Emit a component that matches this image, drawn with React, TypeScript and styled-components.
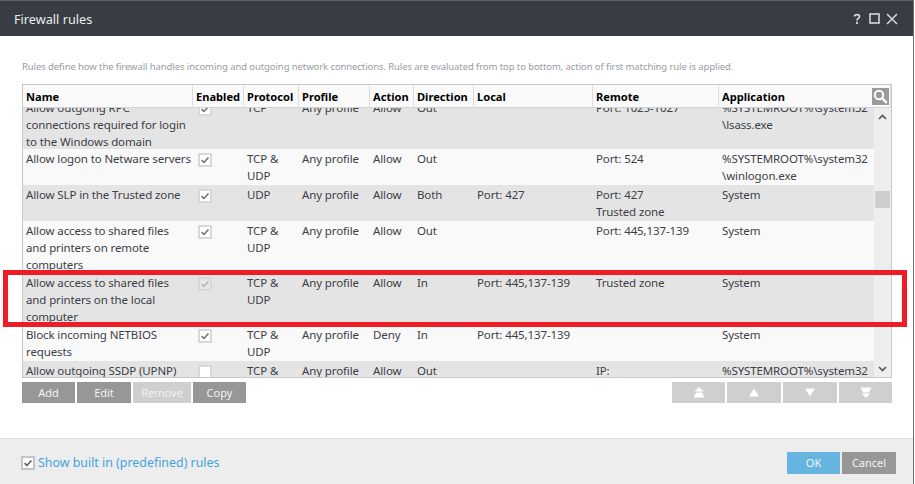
import React from "react";
import styled, { createGlobalStyle } from "styled-components";

const Global = createGlobalStyle`
  html, body { margin: 0; padding: 0; background: #fff; }
  #root { width: 915px; height: 484px; overflow: hidden; }
`;

const columns = "170px 51px 55px 71px 44px 60px 119px 126px 1fr";

const Window = styled.div`
  position: relative;
  width: 914px;
  height: 484px;
  box-sizing: border-box;
  border-right: 1px solid #6e7074;
  display: flex;
  flex-direction: column;
  font-family: "Noto Sans", "Open Sans", sans-serif;
  font-size: 11.5px;
  letter-spacing: -0.12px;
  color: #3d4046;
  background: #fff;
`;
const TitleBar = styled.div`
  height: 35px;
  flex: none;
  border-top: 1px solid #5e6165;
  background: #383c43;
  display: flex;
  align-items: center;
  justify-content: space-between;
  padding: 0 15px 0 14px;
  color: #eceef0;
  font-size: 12.7px;
  letter-spacing: 0;
`;
const TitleIcons = styled.div`
  display: flex;
  align-items: center;
  gap: 6px;
`;
const Content = styled.div`
  flex: 1;
  padding: 24px 22px 0;
`;
const Note = styled.div`
  font-size: 9.5px;
  letter-spacing: -0.09px;
  line-height: 14px;
  color: #9a9c9f;
  margin-bottom: 10px;
`;
const Table = styled.div`
  width: 870px;
  height: 294px;
  box-sizing: border-box;
  border: 1px solid #c8c8c8;
  display: flex;
  flex-direction: column;
`;
const HeaderRow = styled.div`
  position: relative;
  height: 23px;
  flex: none;
  box-sizing: border-box;
  display: grid;
  grid-template-columns: ${columns};
  background: #fafafa;
  border-bottom: 1px solid #d2d2d2;
`;
const HeaderCell = styled.div`
  padding-left: 3px;
  font-weight: 700;
  font-size: 11.1px;
  letter-spacing: 0;
  color: #000;
  line-height: 23px;
  border-right: 1px solid #dcdcdc;
  white-space: nowrap;
  &:last-of-type { border-right: none; }
`;
const SearchButton = styled.div`
  position: absolute;
  right: 2px;
  top: 3px;
  width: 17px;
  height: 17px;
  background: #9a9a9a;
  display: flex;
`;
const BodyWrap = styled.div`
  flex: 1;
  min-height: 0;
  display: flex;
`;
const Rows = styled.div`
  flex: 1;
  overflow: hidden;
`;
const RowsInner = styled.div`
  margin-top: -10px;
`;
const Row = styled.div<{ $shade: boolean; $h: number }>`
  display: grid;
  grid-template-columns: ${columns};
  height: ${(p) => p.$h}px;
  padding-top: 1px;
  box-sizing: border-box;
  background: ${(p) => (p.$shade ? "#e4e4e4" : "#f9f9f9")};
  line-height: 17px;
`;
const Cell = styled.div`
  padding-left: 3px;
  white-space: pre-line;
`;
const CheckCell = styled.div`
  padding: 3px 0 0 5px;
`;
const Box = styled.div<{ $muted?: boolean }>`
  width: 10px;
  height: 10px;
  border: 2px solid #d8d8d8;
  background: ${(p) => (p.$muted ? "#e6e6e6" : "#fff")};
  display: flex;
  align-items: center;
  justify-content: center;
`;
const Scrollbar = styled.div`
  width: 17px;
  flex: none;
  background: #eeeeee;
  display: flex;
  flex-direction: column;
  align-items: center;
  justify-content: space-between;
  position: relative;
  padding: 6px 0 5px;
  box-sizing: border-box;
`;
const Thumb = styled.div`
  position: absolute;
  top: 83px;
  left: 1px;
  width: 15px;
  height: 17px;
  background: #cdcdcd;
`;
const ToolBar = styled.div`
  display: flex;
  justify-content: space-between;
  width: 870px;
  margin-top: 4px;
`;
const Group = styled.div`
  display: flex;
  gap: 2px;
`;
const ActionButton = styled.div<{ $w: number; $off?: boolean }>`
  width: ${(p) => p.$w}px;
  height: 21px;
  background: ${(p) => (p.$off ? "#cfcfcf" : "#979797")};
  color: #f2f2f2;
  font-size: 11px;
  letter-spacing: 0;
  line-height: 21px;
  text-align: center;
`;
const ArrowButton = styled.div<{ $w: number }>`
  width: ${(p) => p.$w}px;
  height: 21px;
  background: #cfcfcf;
  display: flex;
  align-items: center;
  justify-content: center;
`;
const Footer = styled.div`
  height: 43px;
  flex: none;
  border-top: 1px solid #e2e2e2;
  background: #ededed;
  display: flex;
  align-items: center;
  justify-content: space-between;
  padding: 2px 17px 0 21px;
`;
const ShowRules = styled.div`
  display: flex;
  align-items: center;
  gap: 3px;
  color: #45a4dc;
  font-size: 12.4px;
  letter-spacing: 0;
`;
const FooterBox = styled.div`
  width: 10px;
  height: 10px;
  border: 2px solid #c4c4c4;
  background: #fff;
  display: flex;
  align-items: center;
  justify-content: center;
`;
const DialogButtons = styled.div`
  display: flex;
  gap: 2px;
`;
const DialogButton = styled.div<{ $primary?: boolean }>`
  width: ${(p) => (p.$primary ? 53 : 54)}px;
  height: 22px;
  line-height: 22px;
  text-align: center;
  font-size: 11px;
  letter-spacing: 0;
  color: #f4f4f4;
  background: ${(p) => (p.$primary ? "#66b5e0" : "#979797")};
`;
const Highlight = styled.div`
  position: absolute;
  left: 3px;
  top: 270px;
  width: 904px;
  height: 57px;
  box-sizing: border-box;
  border: 5px solid #ee1c25;
  pointer-events: none;
`;

const Check = ({ color = "#707070", size = 10 }: { color?: string; size?: number }) => (
  <svg width={size} height={size} viewBox="0 0 11 11" fill="none">
    <path d="M1.8 5.6 4.3 8.2 9.3 2.8" stroke={color} strokeWidth="1.7" />
  </svg>
);

const Arrow = ({ up, double }: { up: boolean; double?: boolean }) => (
  <svg width="12" height="11" viewBox="0 0 12 11" fill="#fff" style={{ transform: up ? undefined : "scaleY(-1)" }}>
    {double ? (
      <>
        <path d="M6 0 10.5 4.5H1.5Z" />
        <path d="M3 5.5H9L11.5 10.5H0.5Z" />
      </>
    ) : (
      <path d="M6 1.5 11 9.5H1Z" />
    )}
  </svg>
);

type RowData = {
  name: string; on: boolean; muted?: boolean; protocol: string; action: string;
  direction: string; local?: string; remote?: string; app?: string; h: number; shade: boolean;
};

const rows: RowData[] = [
  { name: "Allow outgoing RPC\nconnections required for login\nto the Windows domain", on: true, protocol: "TCP", action: "Allow", direction: "Out", remote: "Port: 1025-1027", app: "%SYSTEMROOT%\\system32\n\\lsass.exe", h: 51, shade: true },
  { name: "Allow logon to Netware servers", on: true, protocol: "TCP &\nUDP", action: "Allow", direction: "Out", remote: "Port: 524", app: "%SYSTEMROOT%\\system32\n\\winlogon.exe", h: 36, shade: false },
  { name: "Allow SLP in the Trusted zone", on: true, protocol: "UDP", action: "Allow", direction: "Both", local: "Port: 427", remote: "Port: 427\nTrusted zone", app: "System", h: 36, shade: true },
  { name: "Allow access to shared files\nand printers on remote\ncomputers", on: true, protocol: "TCP &\nUDP", action: "Allow", direction: "Out", remote: "Port: 445,137-139", app: "System", h: 52, shade: false },
  { name: "Allow access to shared files\nand printers on the local\ncomputer", on: true, muted: true, protocol: "TCP &\nUDP", action: "Allow", direction: "In", local: "Port: 445,137-139", remote: "Trusted zone", app: "System", h: 52, shade: true },
  { name: "Block incoming NETBIOS\nrequests", on: true, protocol: "TCP &\nUDP", action: "Deny", direction: "In", local: "Port: 445,137-139", app: "System", h: 36, shade: false },
  { name: "Allow outgoing SSDP (UPNP)", on: false, protocol: "TCP &\nUDP", action: "Allow", direction: "Out", remote: "IP:", app: "%SYSTEMROOT%\\system32", h: 36, shade: true },
];

const headers = ["Name", "Enabled", "Protocol", "Profile", "Action", "Direction", "Local", "Remote", "Application"];

export default function App() {
  return (
    <Window>
      <Global />
      <TitleBar>
        <span>Firewall rules</span>
        <TitleIcons>
          <svg width="12" height="12" viewBox="0 0 12 12" fill="none" stroke="#d5d7d9" strokeWidth="1.8">
            <path d="M3.5 3.5C3.5 1 8.5 1 8.5 3.5 8.5 5.5 6 5.3 6 7.5" />
            <path d="M6 8.8V11" />
          </svg>
          <svg width="11" height="11" viewBox="0 0 11 11" fill="none" stroke="#d5d7d9" strokeWidth="1.6"><rect x="1" y="1" width="9" height="9" /></svg>
          <svg width="12" height="12" viewBox="0 0 12 12" fill="none" stroke="#d5d7d9" strokeWidth="1.5"><path d="M1 1 11 11M11 1 1 11" /></svg>
        </TitleIcons>
      </TitleBar>
      <Content>
        <Note>Rules define how the firewall handles incoming and outgoing network connections. Rules are evaluated from top to bottom, action of first matching rule is applied.</Note>
        <Table>
          <HeaderRow>
            {headers.map((h) => <HeaderCell key={h}>{h}</HeaderCell>)}
            <SearchButton>
              <svg width="17" height="17" viewBox="0 0 17 17" fill="none" stroke="#fff" strokeWidth="2">
                <circle cx="7" cy="7" r="4.2" />
                <path d="M10.3 10.3 14.8 14.8" strokeWidth="2.4" />
              </svg>
            </SearchButton>
          </HeaderRow>
          <BodyWrap>
            <Rows>
              <RowsInner>
                {rows.map((r) => (
                  <Row key={r.name} $shade={r.shade} $h={r.h}>
                    <Cell>{r.name}</Cell>
                    <CheckCell>
                      <Box $muted={r.muted}>{r.on && <Check color={r.muted ? "#b5b5b5" : "#707070"} />}</Box>
                    </CheckCell>
                    <Cell>{r.protocol}</Cell>
                    <Cell>Any profile</Cell>
                    <Cell>{r.action}</Cell>
                    <Cell>{r.direction}</Cell>
                    <Cell>{r.local}</Cell>
                    <Cell>{r.remote}</Cell>
                    <Cell>{r.app}</Cell>
                  </Row>
                ))}
              </RowsInner>
            </Rows>
            <Scrollbar>
              <svg width="9" height="6" viewBox="0 0 9 6" fill="none" stroke="#555" strokeWidth="1.6"><path d="M1 5 4.5 1.5 8 5" /></svg>
              <Thumb />
              <svg width="9" height="6" viewBox="0 0 9 6" fill="none" stroke="#555" strokeWidth="1.6"><path d="M1 1 4.5 4.5 8 1" /></svg>
            </Scrollbar>
          </BodyWrap>
        </Table>
        <ToolBar>
          <Group>
            <ActionButton $w={53}>Add</ActionButton>
            <ActionButton $w={54}>Edit</ActionButton>
            <ActionButton $w={58} $off>Remove</ActionButton>
            <ActionButton $w={53}>Copy</ActionButton>
          </Group>
          <Group>
            <ArrowButton $w={53}><Arrow up double /></ArrowButton>
            <ArrowButton $w={54}><Arrow up /></ArrowButton>
            <ArrowButton $w={54}><Arrow up={false} /></ArrowButton>
            <ArrowButton $w={53}><Arrow up={false} double /></ArrowButton>
          </Group>
        </ToolBar>
      </Content>
      <Footer>
        <ShowRules>
          <FooterBox><Check size={10} color="#555" /></FooterBox>
          Show built in (predefined) rules
        </ShowRules>
        <DialogButtons>
          <DialogButton $primary>OK</DialogButton>
          <DialogButton>Cancel</DialogButton>
        </DialogButtons>
      </Footer>
      <Highlight />
    </Window>
  );
}
